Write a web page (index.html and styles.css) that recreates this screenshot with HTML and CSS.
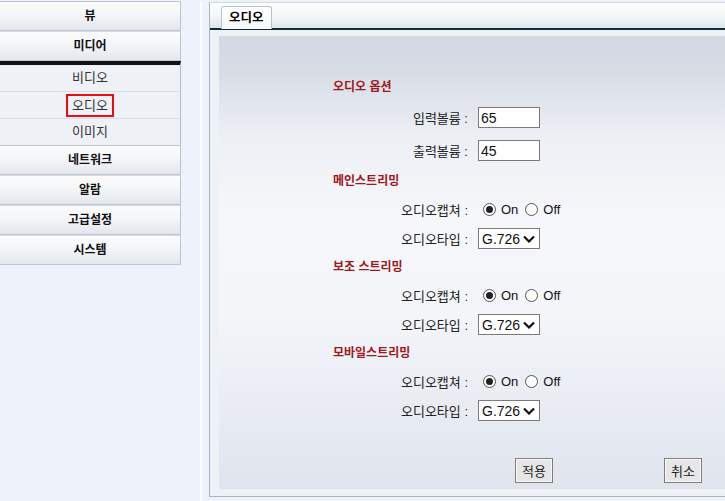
FILE: index.html
```html
<!DOCTYPE html>
<html lang="ko">
<head>
    <meta charset="UTF-8">
    <meta name="viewport" content="width=device-width, initial-scale=1.0">
    <title>오디오 설정</title>
    <link rel="stylesheet" href="styles.css">
</head>
<body>
    <nav class="sidebar">
        <div class="menu first">뷰</div>
        <div class="menu">미디어</div>
        <div class="submenu">
            <div class="sub-item">비디오</div>
            <div class="sub-item"><span class="active">오디오</span></div>
            <div class="sub-item">이미지</div>
        </div>
        <div class="menu">네트워크</div>
        <div class="menu">알람</div>
        <div class="menu">고급설정</div>
        <div class="menu">시스템</div>
    </nav>

    <div class="main">
        <div class="main-inner">
            <div class="panel">
                <div class="tabbar">
                    <div class="tab">오디오</div>
                </div>
                <div class="panel-body">
                    <div class="content">
                        <div class="form">
                            <div class="heading">오디오 옵션</div>
                            <div class="row tall">
                                <label>입력볼륨 :</label>
                                <input type="text" class="text" value="65">
                            </div>
                            <div class="row tall">
                                <label>출력볼륨 :</label>
                                <input type="text" class="text" value="45">
                            </div>

                            <div class="heading">메인스트리밍</div>
                            <div class="row">
                                <label>오디오캡쳐 :</label>
                                <span class="radios">
                                    <input type="radio" name="cap1" checked> On
                                    <input type="radio" name="cap1"> Off
                                </span>
                            </div>
                            <div class="row">
                                <label>오디오타입 :</label>
                                <span class="select-wrap">
                                    <select><option>G.726</option></select>
                                    <svg class="chevron" width="12" height="8" viewBox="0 0 12 8"><path d="M1 1.5 L6 6.5 L11 1.5" fill="none" stroke="#111" stroke-width="2.2"/></svg>
                                </span>
                            </div>

                            <div class="heading">보조 스트리밍</div>
                            <div class="row">
                                <label>오디오캡쳐 :</label>
                                <span class="radios">
                                    <input type="radio" name="cap2" checked> On
                                    <input type="radio" name="cap2"> Off
                                </span>
                            </div>
                            <div class="row">
                                <label>오디오타입 :</label>
                                <span class="select-wrap">
                                    <select><option>G.726</option></select>
                                    <svg class="chevron" width="12" height="8" viewBox="0 0 12 8"><path d="M1 1.5 L6 6.5 L11 1.5" fill="none" stroke="#111" stroke-width="2.2"/></svg>
                                </span>
                            </div>

                            <div class="heading">모바일스트리밍</div>
                            <div class="row">
                                <label>오디오캡쳐 :</label>
                                <span class="radios">
                                    <input type="radio" name="cap3" checked> On
                                    <input type="radio" name="cap3"> Off
                                </span>
                            </div>
                            <div class="row">
                                <label>오디오타입 :</label>
                                <span class="select-wrap">
                                    <select><option>G.726</option></select>
                                    <svg class="chevron" width="12" height="8" viewBox="0 0 12 8"><path d="M1 1.5 L6 6.5 L11 1.5" fill="none" stroke="#111" stroke-width="2.2"/></svg>
                                </span>
                            </div>
                        </div>

                        <div class="actions">
                            <button class="btn">적용</button>
                            <button class="btn cancel">취소</button>
                        </div>
                    </div>
                </div>
            </div>
        </div>
    </div>
</body>
</html>
```

FILE: styles.css
```css
html, body {
    margin: 0;
    height: 100%;
}
body {
    display: flex;
    background: #eef2fb;
    font-family: "Liberation Sans", "Noto Sans CJK KR", sans-serif;
    font-size: 12px;
    color: #222;
    overflow: hidden;
}

/* left menu */
.sidebar {
    width: 181px;
    flex: none;
    padding-top: 1px;
}
.menu {
    height: 28px;
    line-height: 28px;
    text-align: center;
    font-weight: bold;
    color: #111;
    border: 1px solid #bcc6d3;
    border-left: none;
    background: linear-gradient(#fbfcfd 0%, #f3f5f8 45%, #e3e7ed 100%);
}
.menu + .menu {
    border-top-color: #d4dbe4;
}
.submenu {
    border-top: 4px solid #111;
    border-right: 1px solid #b3bcc8;
    background: #eef1f5;
}
.sub-item {
    height: 26px;
    line-height: 26px;
    text-align: center;
    font-size: 13px;
    color: #333;
    border-bottom: 1px solid #d7dde5;
}
.sub-item:last-child {
    border-bottom: none;
}
.sub-item .active {
    display: inline-block;
    line-height: 19px;
    padding: 0 4px;
    border: 2px solid #e41010;
    vertical-align: middle;
}

/* right side */
.main {
    flex: 1;
    min-width: 0;
    padding-left: 19px;
}
.main-inner {
    height: 100%;
    border-left: 2px solid #fff;
    padding-left: 7px;
}
.panel {
    margin-top: 2px;
    height: 493px;
    border: 1px solid #a9b4c4;
    border-right: none;
    border-top-color: #d3d8e2;
    display: flex;
    flex-direction: column;
}
.tabbar {
    height: 25px;
    padding-left: 11px;
    background: linear-gradient(#fdfefe 0%, #f4f8f9 50%, #dde6ea 100%);
    border-bottom: 2px solid #17283a;
    display: flex;
    align-items: flex-end;
}
.tab {
    height: 22px;
    line-height: 22px;
    padding: 0 7px;
    margin-bottom: -1px;
    font-weight: bold;
    font-size: 12.5px;
    color: #000;
    background: linear-gradient(#ffffff, #f5f7f9);
    border: 1px solid #b9c2cc;
    border-bottom: none;
    border-radius: 3px 3px 0 0;
}
.panel-body {
    flex: 1;
    padding: 6px 0 7px 9px;
    background: #eef2f7;
    display: flex;
}
.content {
    flex: 1;
    background: linear-gradient(#d3d7e1 0%, #d8dce5 8%, #eceff4 22%, #f6f7fa 40%, #f3f5f9 62%, #dfe4ed 100%);
    padding: 37px 0 0 114px;
}

.heading {
    height: 28px;
    line-height: 28px;
    font-weight: bold;
    color: #a0161c;
}
.row {
    height: 29px;
    display: flex;
    align-items: center;
}
.row.tall {
    height: 33px;
}
.row label {
    width: 135px;
    text-align: right;
    margin-right: 10px;
    font-size: 13px;
    color: #222;
}
.text {
    width: 56px;
    height: 17px;
    padding: 1px 2px;
    border: 1px solid #7a7a7a;
    font-family: "Liberation Sans", sans-serif;
    font-size: 14px;
    color: #111;
    background: #fff;
}
.radios {
    display: flex;
    align-items: center;
    font-size: 13px;
    color: #111;
}
.radios input {
    appearance: none;
    width: 13px;
    height: 13px;
    margin: 0 5px;
    border: 1px solid #555;
    border-radius: 50%;
    background: #fff;
    display: inline-flex;
    align-items: center;
    justify-content: center;
}
.radios input + input {
    margin-left: 7px;
}
.radios input:checked::before {
    content: "";
    width: 7px;
    height: 7px;
    border-radius: 50%;
    background: #222;
}
.select-wrap {
    position: relative;
    display: inline-block;
}
.select-wrap select {
    appearance: none;
    width: 62px;
    height: 21px;
    padding: 0 0 0 3px;
    border: 1px solid #7a7a7a;
    border-radius: 0;
    background: #fff;
    font-family: "Liberation Sans", sans-serif;
    font-size: 14px;
    color: #111;
}
.chevron {
    position: absolute;
    right: 5px;
    top: 7px;
    pointer-events: none;
}

.actions {
    display: flex;
    padding: 33px 23px 0 182px;
}
.btn {
    width: 38px;
    height: 25px;
    padding: 0;
    font-family: "Liberation Sans", "Noto Sans CJK KR", sans-serif;
    font-size: 13px;
    color: #222;
    background: #e6e6e6;
    border: 1px solid #7d7d7d;
    box-shadow: inset 0 0 0 1px #f8f8f8;
}
.btn.cancel {
    margin-left: auto;
}
```
